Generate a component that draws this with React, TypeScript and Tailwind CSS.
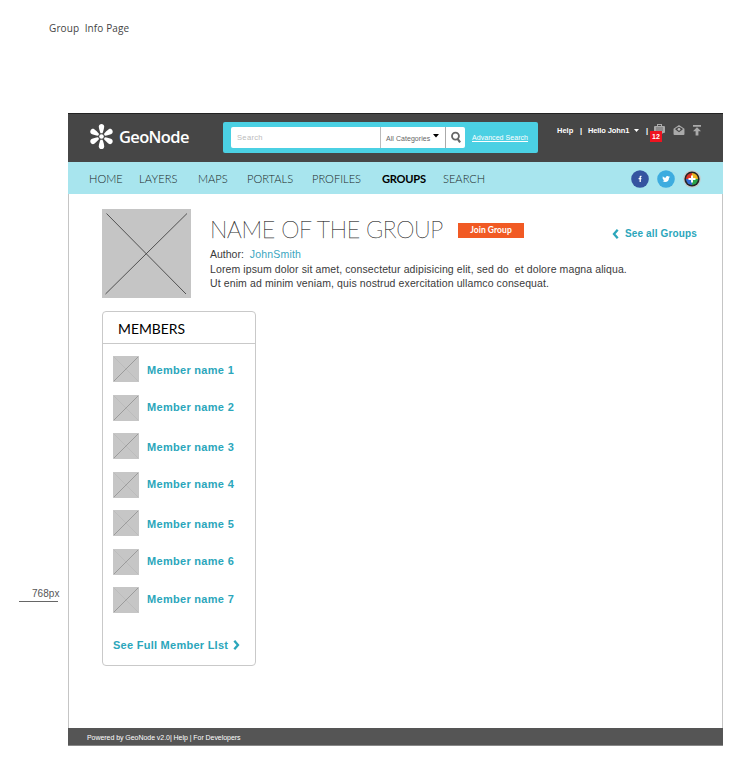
import React from 'react';

const navItems = [
  { label: 'HOME', cls: 'w-[50px]' },
  { label: 'LAYERS', cls: 'w-[59px] tracking-[0.12px]' },
  { label: 'MAPS', cls: 'w-[49px]' },
  { label: 'PORTALS', cls: 'w-[65px]' },
  { label: 'PROFILES', cls: 'w-[70px]' },
  { label: 'GROUPS', cls: 'w-[61px] font-bold text-black tracking-[-0.25px]' },
  { label: 'SEARCH', cls: 'w-[60px]' },
];

const members = [
  { name: 'Member name 1', cls: 'pt-[6px]' },
  { name: 'Member name 2', cls: 'pt-[4px]' },
  { name: 'Member name 3', cls: 'pt-[6px]' },
  { name: 'Member name 4', cls: 'pt-[4.5px]' },
  { name: 'Member name 5', cls: 'pt-[6px]' },
  { name: 'Member name 6', cls: 'pt-[4px]' },
  { name: 'Member name 7', cls: 'pt-[4px]' },
];

function Logo() {
  return (
    <svg className="h-[27px] w-[25px]" viewBox="0 0 26 27" fill="#fff">
      {[0, 60, 120, 180, 240, 300].map((a) => (
        <path key={a} transform={`rotate(${a} 13 13.5)`} d="M11.9 10 C11.2 8 10.2 5 10.2 3.2 C10.2 1.5 11.5 .5 13 .5 S15.8 1.5 15.8 3.2 C15.8 5 14.8 8 14.1 10 Z" />
      ))}
      <circle cx="13" cy="13.5" r="2.4" />
    </svg>
  );
}

function Chevron({ left }: { left?: boolean }) {
  return (
    <svg className="h-[10px] w-[7px]" viewBox="0 0 7 10" fill="none" stroke="#2ba6bb" strokeWidth="2.3">
      <path d={left ? 'M5.7 .8 L2 5 L5.7 9.2' : 'M1.3 .8 L5 5 L1.3 9.2'} />
    </svg>
  );
}

function Header() {
  return (
    <header className="flex h-[49px] items-start border-t border-[#222] bg-[#464646]">
      <div className="flex w-[155px] shrink-0 items-center pl-[21px] pt-[9px]">
        <Logo />
        <span className="ml-[5px] font-['Open_Sans',sans-serif] text-[16.5px] leading-[24px] font-semibold tracking-[-0.65px] text-white">GeoNode</span>
      </div>
      <div className="mt-[8px] flex h-[31px] w-[315px] shrink-0 items-center rounded-[2px] bg-[#4bd0e3] pl-[8px]">
        <div className="flex h-[21px] w-[234px] rounded-[2px] bg-white leading-[21px]">
          <span className="w-[149px] pl-[6px] text-[7.6px] tracking-[0.3px] text-[#bbb]">Search</span>
          <span className="flex w-[65px] items-center border-l border-[#bbb] pt-[1px] pl-[5px] text-[7px] tracking-[0.05px] text-[#666]">
            All Categories
            <svg className="mb-[4px] ml-[3px] h-[4px] w-[6px]" viewBox="0 0 6 4"><path d="M0 0H6L3 3.5Z" fill="#000" /></svg>
          </span>
          <span className="flex flex-1 items-center justify-center border-l border-[#aaa]">
            <svg className="h-[13px] w-[12px]" viewBox="0 0 11 12" fill="none" stroke="#666">
              <circle cx="5" cy="4.7" r="3.2" strokeWidth="1.7" />
              <path d="M7 7.3L9.3 10.5" strokeWidth="2" />
            </svg>
          </span>
        </div>
        <span className="ml-[7px] pt-[2px] text-[7px] tracking-[0.05px] text-white underline">Advanced Search</span>
      </div>
      <div className="flex items-start pt-[11px] pl-[19px] text-[7.5px] leading-[11px] font-bold whitespace-pre text-white">
        <span className="w-[23px]">Help</span>
        <span className="w-[8px]">|</span>
        <span className="w-[46px] tracking-[-0.12px]">Hello John1</span>
        <svg className="mt-[4px] h-[3px] w-[5px]" viewBox="0 0 5 3"><path d="M0 0H5L2.5 3Z" fill="#fff" /></svg>
        <span className="ml-[7px] w-[5px]">|</span>
        <div className="relative h-[17px] w-[16px]">
          <svg className="absolute top-[-1px] left-[3px] h-[11px] w-[11px]" viewBox="0 0 11 11" fill="#aaa">
            <rect x="3.5" y=".5" width="4" height="3" fill="none" stroke="#aaa" />
            <rect x="0" y="2" width="11" height="7" rx="1" />
            <path d="M2 4H9M2 6H9" stroke="#4a4a4a" strokeWidth=".6" />
            <path d="M5 8H10L7 11Z" />
          </svg>
          <span className="absolute top-[6px] left-[-1px] h-[11px] w-[12px] bg-[#ee1420] text-center text-[7px] leading-[11px]">12</span>
        </div>
        <svg className="ml-[6px] h-[10px] w-[12px]" viewBox="0 0 12 11">
          <path d="M0 4L6 0L12 4V10Q12 11 11 11H1Q0 11 0 10Z" fill="#aaa" />
          <path d="M2 4Q6 .5 10 4V5L6 8L2 5Z" fill="#464646" />
          <circle cx="6" cy="4.7" r="1.5" fill="#bbb" />
        </svg>
        <svg className="ml-[8px] h-[11px] w-[8px]" viewBox="0 0 8 11" fill="#aaa">
          <path d="M0 0H8V1.7H0ZM4 2.3L8 6.3H5.4V10.5H2.6V6.3H0Z" />
        </svg>
      </div>
    </header>
  );
}

function Socials() {
  return (
    <div className="ml-auto flex gap-[8px] pt-[1px] pr-[22px]">
      <svg className="h-[18px] w-[18px]" viewBox="0 0 18 18">
        <circle cx="9" cy="9" r="8.8" fill="#3554a0" />
        <path d="M10.5 6.3H9.8Q9.2 6.3 9.2 7V12M7.6 8.7H10.4" fill="none" stroke="#fff" strokeWidth="1.3" />
      </svg>
      <svg className="h-[18px] w-[18px]" viewBox="0 0 18 18">
        <circle cx="9" cy="9" r="8.8" fill="#3dacdf" />
        <path d="M5.8 6.2Q7 7.8 8.7 7.8Q8.8 5.8 10.5 6Q11.2 6 11.6 6.6L12.7 6.3L12.1 7.2L12.9 7.3L12 8.1Q11.8 12 8.1 12Q6.5 12 5.5 11.2Q6.7 11.2 7.3 10.7Q6.4 10.5 6.1 9.7H6.7Q5.7 9.2 5.6 8.3Z" fill="#fff" />
      </svg>
      <svg className="h-[18px] w-[18px]" viewBox="0 0 18 18">
        <circle cx="9" cy="9" r="8.8" fill="#c5c9ca" />
        <circle cx="9" cy="9" r="7.6" fill="#252525" />
        <path d="M9 9V3A6 6 0 0 0 3 9Z" fill="#df3327" />
        <path d="M9 9H3A6 6 0 0 0 9 15Z" fill="#3268d1" />
        <path d="M9 9V15A6 6 0 0 0 15 9Z" fill="#2ba34a" />
        <path d="M9 9H15A6 6 0 0 0 9 3Z" fill="#eeb51d" />
        <path d="M9 5.5V12.5M5.5 9H12.5" stroke="#fff" strokeWidth="2" />
      </svg>
    </div>
  );
}

function MembersCard() {
  return (
    <section className="mt-[13px] ml-[33px] h-[355px] w-[154px] rounded-[4px] border border-[#c9c9c9]">
      <h2 className="h-[32px] border-b border-[#c9c9c9] pl-[15px] font-[Lato,sans-serif] text-[13.9px] leading-[34px] text-black">MEMBERS</h2>
      <ul className="flex flex-col gap-[12.5px] pt-[12px] pl-[10px]">
        {members.map((m) => (
          <li key={m.name} className="flex h-[26px] items-start">
            <svg className="h-[26px] w-[26px] shrink-0" viewBox="0 0 26 26">
              <rect width="26" height="26" fill="#c6c6c6" />
              <path d="M1 1L25 25" stroke="#b8b8b8" strokeWidth=".7" />
              <path d="M1 25L25 1" stroke="#888" strokeWidth=".7" />
            </svg>
            <span className={`ml-[8px] text-[11px] leading-[16px] font-bold tracking-[0.3px] text-[#2ba6bb] ${m.cls}`}>{m.name}</span>
          </li>
        ))}
      </ul>
      <div className="mt-[24px] flex items-center pl-[10px] text-[11px] leading-[16px] font-bold tracking-[0.26px] text-[#2ba6bb]">
        <span className="mr-[5px]">See Full Member LIst</span>
        <Chevron />
      </div>
    </section>
  );
}

export default function App() {
  return (
    <div className="flex h-[783px] w-[750px] flex-col overflow-hidden bg-white font-['Liberation_Sans',sans-serif] antialiased">
      <div className="h-[113px] shrink-0 pt-[20px] pl-[49px] font-['Open_Sans',sans-serif] text-[10px] leading-[16px] tracking-[0.12px] whitespace-pre text-[#444]">Group  Info Page</div>
      <div className="flex h-[633px] shrink-0">
        <aside className="w-[68px] shrink-0 pt-[473px] pl-[19px]">
          <div className="flex h-[16px] w-[39px] border-b border-[#666] pl-[13px] text-[10px] leading-[16px] tracking-[0.05px] whitespace-nowrap text-[#555]">768px</div>
        </aside>
        <main className="flex w-[655px] flex-col">
          <Header />
          <nav className="flex h-[32px] shrink-0 items-center bg-[#a8e5ee] pl-[21px] font-[Lato,sans-serif] text-[11.1px] leading-[16px] font-light text-[#1a2528]">
            {navItems.map((n) => (
              <a key={n.label} className={`shrink-0 pt-[2px] ${n.cls}`}>{n.label}</a>
            ))}
            <Socials />
          </nav>
          <div className="flex-1 border-x border-[#c5c5c5]">
            <div className="flex pt-[15px] pl-[33px]">
              <svg className="h-[89px] w-[89px] shrink-0" viewBox="0 0 89 89">
                <rect width="89" height="89" fill="#c5c5c5" />
                <path d="M4.5 4.5L84 85M85 4.5L3.5 85" stroke="#444" strokeWidth=".9" />
              </svg>
              <div className="ml-[19px] w-[510px] text-[10.5px] leading-[14.5px] text-[#3a3a3a]">
                <div className="flex h-[38px] items-start">
                  <h1 className="w-[248px] shrink-0 pt-[5px] font-[Lato,sans-serif] text-[23.2px] leading-[30px] font-extralight tracking-[-0.35px] whitespace-nowrap text-black [-webkit-text-stroke:0.25px_#333]">NAME OF THE GROUP</h1>
                  <button className="mt-[14px] h-[15px] w-[66px] bg-[#f15a24] font-[Lato,sans-serif] text-[8.5px] leading-[15px] font-bold tracking-[0.05px] text-white">Join Group</button>
                  <a className="mt-[17px] ml-[88px] flex items-center text-[10px] leading-[16px] font-bold tracking-[0.13px] whitespace-nowrap text-[#2ba6bb]">
                    <Chevron left />
                    <span className="ml-[6px]">See all Groups</span>
                  </a>
                </div>
                <p className="whitespace-pre">Author:  <span className="tracking-[0.2px] text-[#3aa5c0]">JohnSmith</span></p>
                <p className="whitespace-pre tracking-[0.1px]">Lorem ipsum dolor sit amet, consectetur adipisicing elit, sed do  et dolore magna aliqua.</p>
                <p className="whitespace-pre tracking-[0.11px]">Ut enim ad minim veniam, quis nostrud exercitation ullamco consequat.</p>
              </div>
            </div>
            <MembersCard />
          </div>
          <footer className="h-[18px] shrink-0 border-b border-[#888] bg-[#555] pl-[19px] text-[7px] leading-[19px] tracking-[-0.05px] text-white">Powered by GeoNode v2.0| Help | For Developers</footer>
        </main>
      </div>
    </div>
  );
}
